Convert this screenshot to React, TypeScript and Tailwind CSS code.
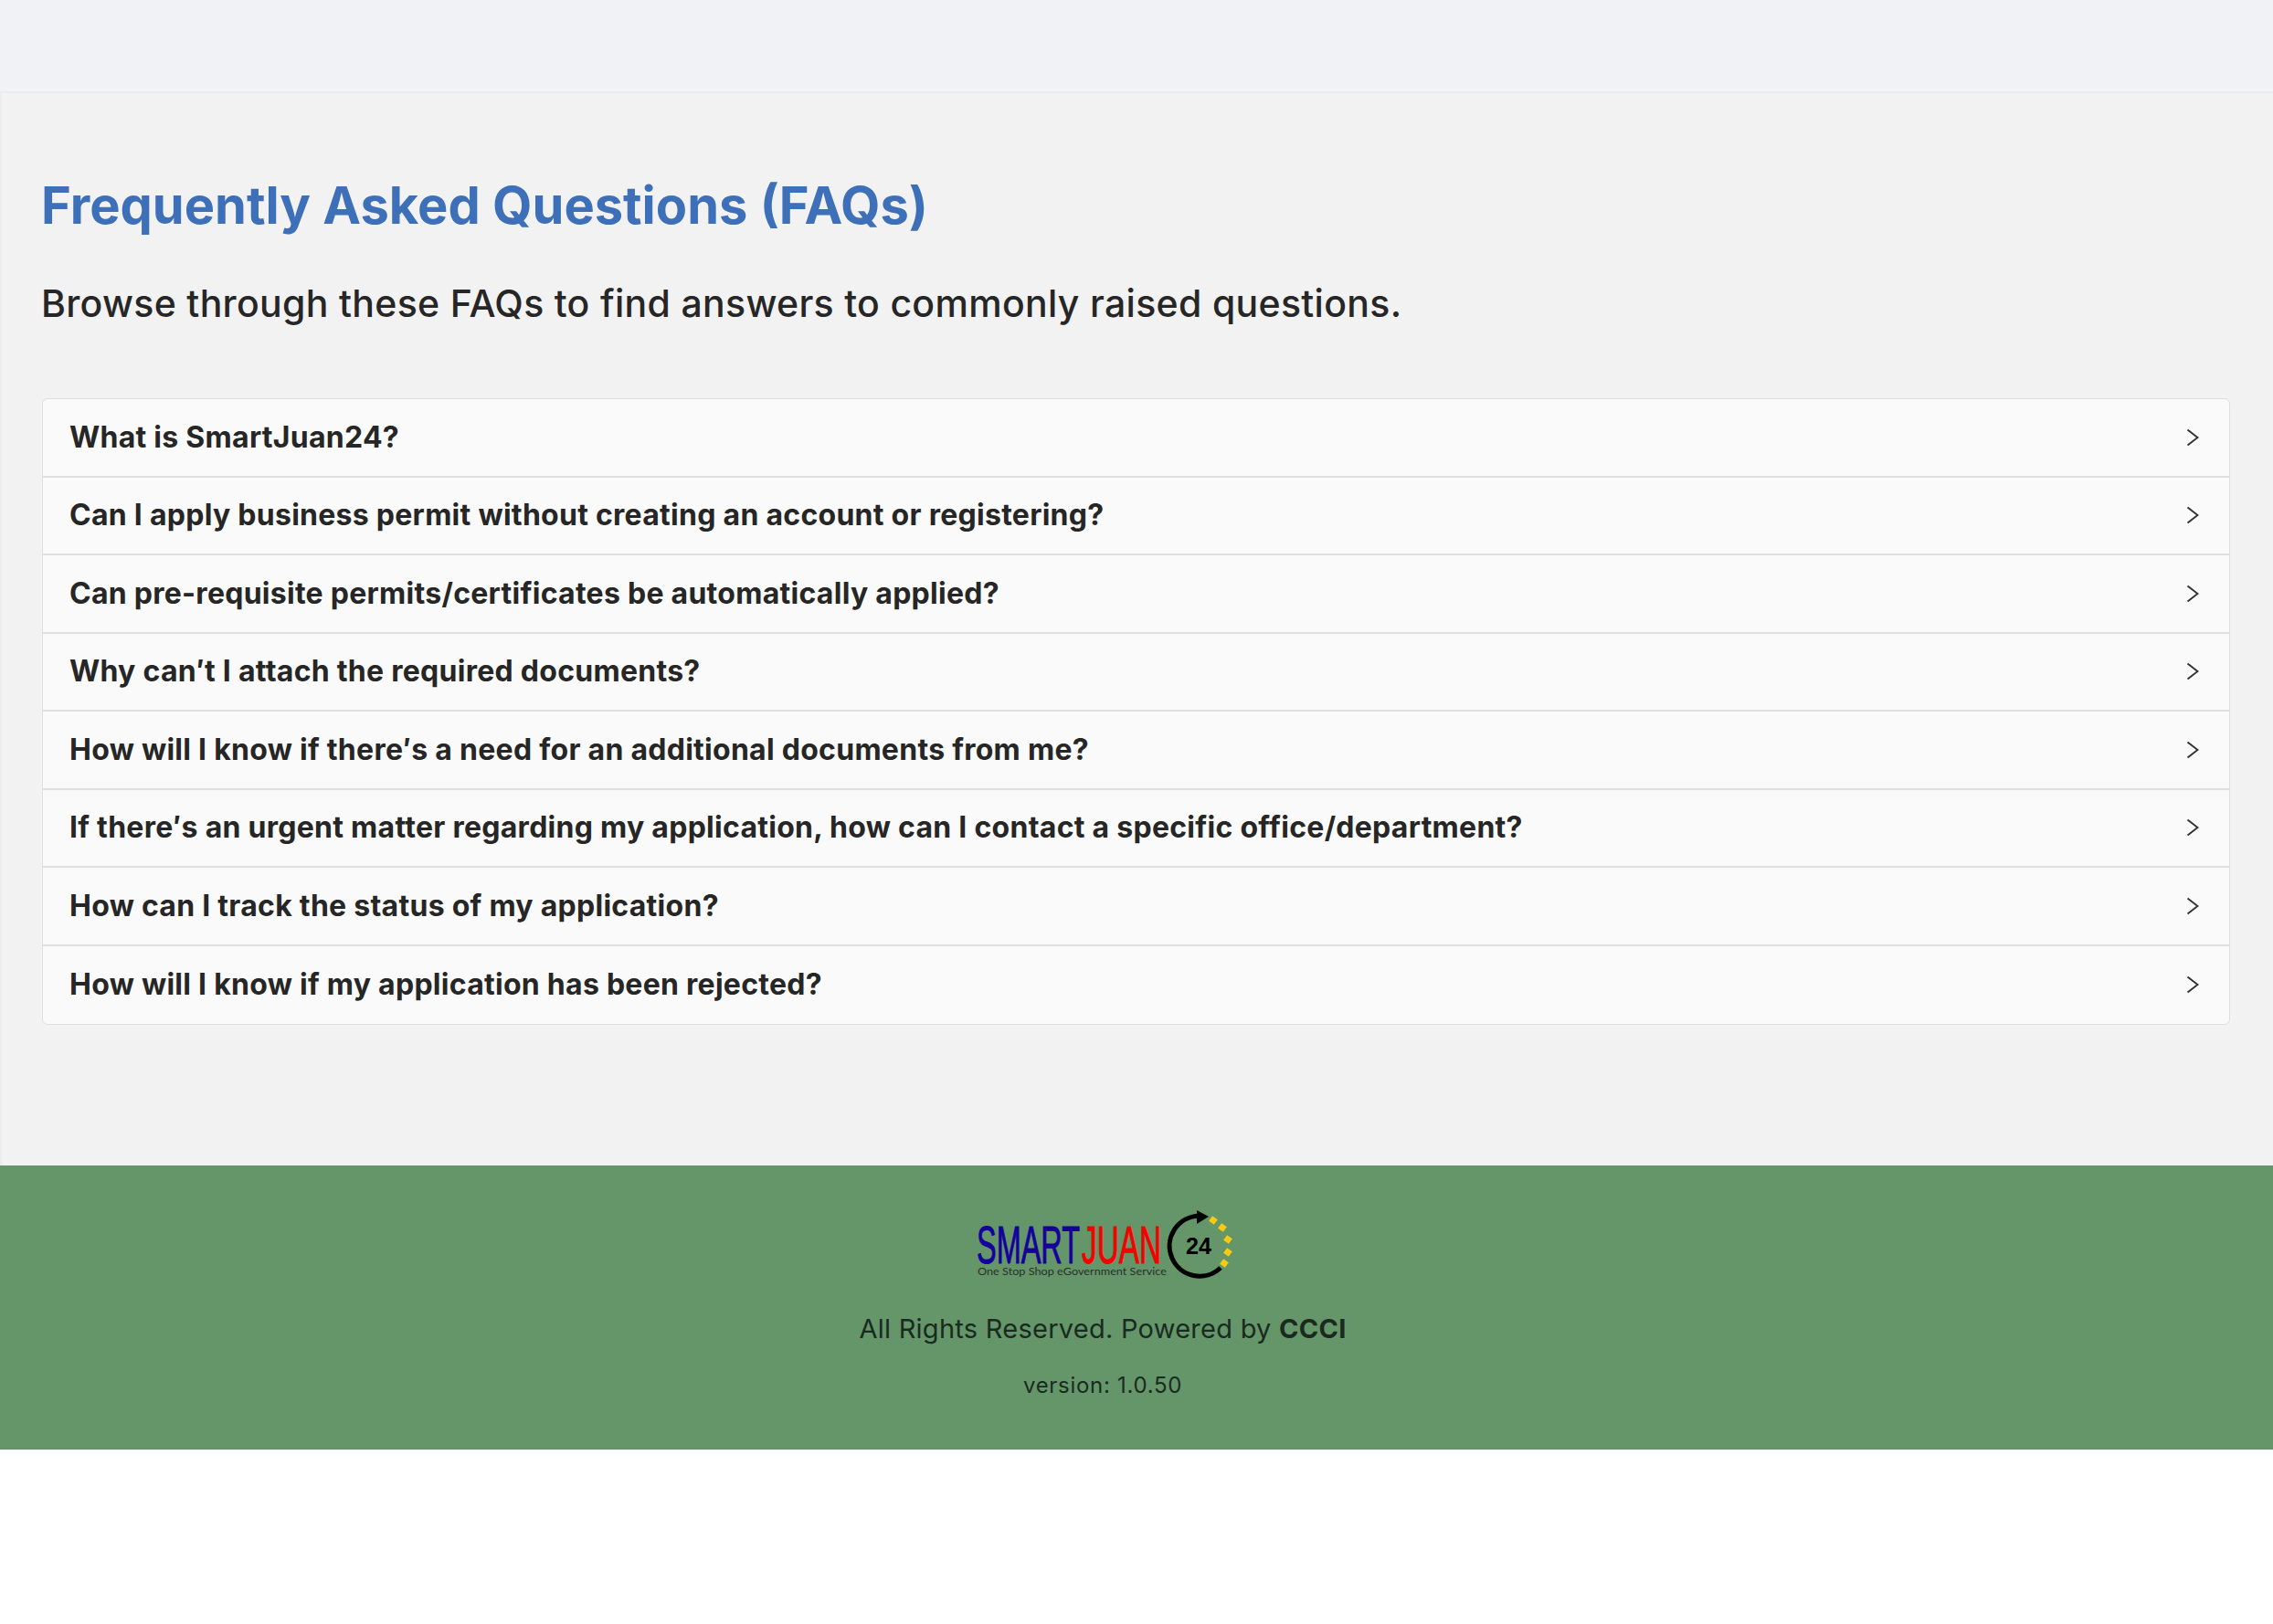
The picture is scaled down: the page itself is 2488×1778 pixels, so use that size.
const questions = [
  'What is SmartJuan24?',
  'Can I apply business permit without creating an account or registering?',
  'Can pre-requisite permits/certificates be automatically applied?',
  'Why can\u2032t I attach the required documents?',
  'How will I know if there\u2032s a need for an additional documents from me?',
  'If there\u2032s an urgent matter regarding my application, how can I contact a specific office/department?',
  'How can I track the status of my application?',
  'How will I know if my application has been rejected?',
];

function Chevron() {
  return (
    <svg width="14" height="20" viewBox="0 0 14 20" fill="none" className="shrink-0">
      <path d="M1.5 1.5 L12.5 10 L1.5 18.5" stroke="#333333" strokeWidth="2" />
    </svg>
  );
}

function Logo() {
  const dots = [
    [259, 11],
    [269, 19],
    [275, 32],
    [275, 46],
    [271, 58],
  ];
  return (
    <svg width="280" height="76" viewBox="0 0 280 76" className="ml-[3px] block">
      <text x="0" y="58" fontFamily="Liberation Sans" fontSize="58" fill="#16009c" stroke="#16009c" strokeWidth="1" textLength="113" lengthAdjust="spacingAndGlyphs">
        SMART
      </text>
      <text x="115" y="58" fontFamily="Liberation Sans" fontSize="58" fill="#f60000" stroke="#f60000" strokeWidth="1" textLength="87" lengthAdjust="spacingAndGlyphs">
        JUAN
      </text>
      <text x="1" y="71" fontFamily="Lato" fontSize="11.5" fill="#2b2f2c" textLength="207" lengthAdjust="spacingAndGlyphs">
        One Stop Shop eGovernment Service
      </text>
      <path d="M267 63 A33 33 0 1 1 243 6.2" fill="none" stroke="#000000" strokeWidth="5" />
      <path d="M241 0 L254 7 L241 15 Z" fill="#000000" />
      <text x="229" y="48" fontFamily="Liberation Sans" fontWeight="700" fontSize="26" fill="#000000" textLength="28" lengthAdjust="spacingAndGlyphs">
        24
      </text>
      {dots.map(([x, y]) => (
        <rect key={x * y} x={x - 3.5} y={y - 3.5} width="7" height="7" fill="#f7cb12" transform={`rotate(35 ${x} ${y})`} />
      ))}
    </svg>
  );
}

export default function App() {
  return (
    <div className="min-h-[1778px] bg-white font-['Inter',sans-serif]">
      {/* Top bar */}
      <div className="h-[100px] bg-[#f0f2f5]" />

      {/* FAQ panel */}
      <main className="h-[1176px] border-t-2 border-l-2 border-[#ececec] bg-[#f2f2f2] pl-[43px] pr-[47px] pt-[88px]">
        <h1 className="text-[56px] leading-[70px] font-bold text-[#3d70b8]">Frequently Asked Questions (FAQs)</h1>
        <p className="mt-[45px] text-[41px] leading-[54px] font-[550] tracking-[0.31px] text-[#262626]">
          Browse through these FAQs to find answers to commonly raised questions.
        </p>

        {/* Accordion */}
        <div className="mt-[77px] ml-[1px] overflow-hidden rounded-[6px] border border-[#dedede] bg-[#fafafa]">
          {questions.map((q) => (
            <div key={q} className="flex h-[85.5px] items-center justify-between border-b-2 border-[#e0e0e0] pl-[29px] pr-[33px] last:border-b-0">
              <span className="text-[32px] font-[650] tracking-[0.27px] text-[#262626]">{q}</span>
              <Chevron />
            </div>
          ))}
        </div>
      </main>

      {/* Footer */}
      <footer className="flex h-[311px] flex-col items-center bg-[#64966a] pt-[49px] pr-[74px] text-[#1b2a20]">
        <Logo />
        <p className="mt-[34px] text-[29px] leading-[40px] tracking-[0.26px]">
          All Rights Reserved. Powered by <span className="font-bold">CCCI</span>
        </p>
        <p className="mt-[26px] text-[24px] leading-[32px] tracking-[0.7px]">version: 1.0.50</p>
      </footer>
    </div>
  );
}
